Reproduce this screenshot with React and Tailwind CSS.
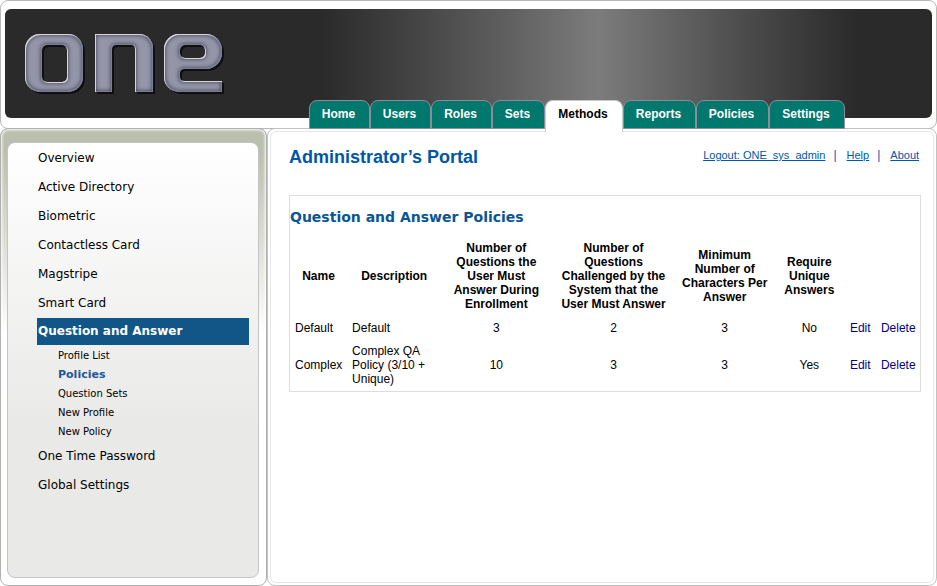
const tabs = [
  { label: 'Home', width: 'w-[61px]' },
  { label: 'Users', width: 'w-[61px]' },
  { label: 'Roles', width: 'w-[61px]' },
  { label: 'Sets', width: 'w-[53px]' },
  { label: 'Methods', width: 'w-[78px]', active: true },
  { label: 'Reports', width: 'w-[73px]' },
  { label: 'Policies', width: 'w-[73px]' },
  { label: 'Settings', width: 'w-[76px]' },
];

const menu = [
  { label: 'Overview' },
  { label: 'Active Directory' },
  { label: 'Biometric' },
  { label: 'Contactless Card' },
  { label: 'Magstripe' },
  { label: 'Smart Card' },
  {
    label: 'Question and Answer',
    active: true,
    children: ['Profile List', 'Policies', 'Question Sets', 'New Profile', 'New Policy'],
  },
  { label: 'One Time Password' },
  { label: 'Global Settings' },
];

const columns = [
  { label: 'Name', width: 'w-[57px]' },
  { label: 'Description', width: 'w-[94px]' },
  { label: 'Number of Questions the User Must Answer During Enrollment', width: 'w-[110px]' },
  { label: 'Number of Questions Challenged by the System that the User Must Answer', width: 'w-[124px]' },
  { label: 'Minimum Number of Characters Per Answer', width: 'w-[98px]' },
  { label: 'Require Unique Answers', width: 'w-[71px]' },
];

const policies = [
  { name: 'Default', description: 'Default', enroll: 3, challenge: 2, min: 3, unique: 'No' },
  { name: 'Complex', description: 'Complex QA Policy (3/10 + Unique)', enroll: 10, challenge: 3, min: 3, unique: 'Yes' },
];

function Logo() {
  return (
    <svg width="210" height="70" viewBox="20 29 210 70" role="img" aria-label="one">
      <defs>
        <mask id="logo-o" maskUnits="userSpaceOnUse" x="20" y="29" width="210" height="70">
          <rect x="25" y="34" width="58" height="58" rx="15" fill="#fff" />
          <rect x="42" y="45" width="25" height="37" rx="5" fill="#000" />
        </mask>
        <mask id="logo-n" maskUnits="userSpaceOnUse" x="20" y="29" width="210" height="70">
          <rect x="95" y="34" width="58" height="58" rx="14" fill="#fff" />
          <rect x="95" y="34" width="40" height="58" fill="#fff" />
          <rect x="95" y="60" width="58" height="32" fill="#fff" />
          <rect x="112" y="45" width="23" height="60" rx="4" fill="#000" />
        </mask>
        <mask id="logo-e" maskUnits="userSpaceOnUse" x="20" y="29" width="210" height="70">
          <rect x="164" y="34" width="40" height="58" rx="15" fill="#fff" />
          <rect x="164" y="34" width="58" height="35" rx="16" fill="#fff" />
          <rect x="185" y="75" width="37" height="17" fill="#fff" />
          <rect x="180" y="69" width="60" height="12" rx="4" fill="#000" />
          <rect x="180" y="45" width="25" height="13" rx="5" fill="#000" />
        </mask>
        <filter id="logo-bevel" filterUnits="userSpaceOnUse" x="20" y="29" width="210" height="70" colorInterpolationFilters="sRGB">
          <feOffset in="SourceAlpha" dx="2" dy="2" result="down" />
          <feGaussianBlur in="down" stdDeviation="0.5" result="drop" />
          <feFlood floodColor="#0c0c0e" floodOpacity="0.9" />
          <feComposite in2="drop" operator="in" result="shadow" />
          <feMorphology in="SourceAlpha" operator="erode" radius="1" result="core" />
          <feComposite in="SourceAlpha" in2="core" operator="out" result="edge" />
          <feFlood floodColor="#787d96" />
          <feComposite in2="edge" operator="in" result="rim" />
          <feOffset in="SourceAlpha" dx="1" dy="1" result="shifted" />
          <feComposite in="SourceAlpha" in2="shifted" operator="out" result="lit" />
          <feFlood floodColor="#d8d5d6" />
          <feComposite in2="lit" operator="in" result="light" />
          <feFlood floodColor="#23232d" floodOpacity="0.8" />
          <feComposite in2="core" operator="out" />
          <feGaussianBlur stdDeviation="2.2" />
          <feComposite in2="core" operator="in" result="inner" />
          <feMerge>
            <feMergeNode in="shadow" />
            <feMergeNode in="SourceGraphic" />
            <feMergeNode in="inner" />
            <feMergeNode in="rim" />
            <feMergeNode in="light" />
          </feMerge>
        </filter>
      </defs>
      <g filter="url(#logo-bevel)" fill="#9495a9">
        <rect x="20" y="29" width="70" height="70" mask="url(#logo-o)" />
        <rect x="90" y="29" width="70" height="70" mask="url(#logo-n)" />
        <rect x="160" y="29" width="70" height="70" mask="url(#logo-e)" />
      </g>
    </svg>
  );
}

function Header() {
  return (
    <header className="rounded-lg border border-[#bcb8b8] px-1 pt-2">
      <div className="h-[109px] rounded-md bg-linear-to-r from-[#2a2a2a] from-34% via-[#7c7c7c] via-64% to-[#2a2a2a] to-92% px-[15px] pt-5">
        <Logo />
      </div>
      <nav className="relative z-10 -mt-[18px] flex h-7 items-start pl-[304px]">
        {tabs.map((tab) => (
          <a
            key={tab.label}
            href="#"
            className={`${tab.width} shrink-0 rounded-t-lg border-t border-x pr-0.5 text-center text-xs leading-[26px] font-bold ${
              tab.active ? 'h-8 border-[#c9c9c9] bg-white text-black' : 'h-[29px] border-b border-[#8c8c96] bg-[#00786e] text-white'
            }`}
          >
            {tab.label}
          </a>
        ))}
      </nav>
    </header>
  );
}

function Sidebar() {
  return (
    <aside className="flex w-[267px] shrink-0 flex-col rounded-lg border border-[#b0b0b0] bg-linear-to-b from-[#babfae] from-5% to-white to-45% pt-[13px] pr-[7px] pb-[7px] pl-1.5 shadow-[inset_0_0_3px_1px_#ffffff]">
      <nav className="grow rounded-lg border border-[#c4c4c4] bg-linear-to-b from-white to-[#e9e9e8] to-65% pt-px font-['DejaVu_Sans',sans-serif] text-xs text-black">
        <ul>
          {menu.map((item) => (
            <li key={item.label}>
              {item.active ? (
                <a href="#" className="mr-[9px] mb-px ml-[29px] block h-[27px] bg-[#125687] pl-px leading-[27px] font-bold text-white">
                  {item.label}
                </a>
              ) : (
                <a href="#" className="block h-[29px] pl-[30px] leading-[29px]">
                  {item.label}
                </a>
              )}
              {item.children && (
                <ul className="pb-px pl-[50px] text-[10px] leading-[19px]">
                  {item.children.map((child) => (
                    <li key={child}>
                      <a href="#" className={child === 'Policies' ? 'block text-[11px] font-bold text-[#1f5796]' : 'block'}>
                        {child}
                      </a>
                    </li>
                  ))}
                </ul>
              )}
            </li>
          ))}
        </ul>
      </nav>
    </aside>
  );
}

function PolicyTable() {
  return (
    <section className="mt-6 border border-[#dddddd] pt-3 pb-px">
      <h2 className="font-['DejaVu_Sans',sans-serif] text-sm leading-[18px] font-bold text-[#0a5596]">Question and Answer Policies</h2>
      <table className="mt-2.5 w-full table-fixed text-xs leading-[14px] text-black">
        <thead>
          <tr className="h-[80px]">
            {columns.map((column) => (
              <th key={column.label} scope="col" className={`${column.width} px-[5px] py-1 text-center font-bold`}>
                {column.label}
              </th>
            ))}
            <td className="w-[31px]" />
            <td className="w-11" />
          </tr>
        </thead>
        <tbody>
          {policies.map((policy) => (
            <tr key={policy.name} className="h-6 text-center">
              <td className="py-1 pl-[5px] text-left">{policy.name}</td>
              <td className="px-[5px] py-1 text-left">{policy.description}</td>
              <td>{policy.enroll}</td>
              <td>{policy.challenge}</td>
              <td>{policy.min}</td>
              <td>{policy.unique}</td>
              <td className="pl-[5px] text-left">
                <a href="#" className="text-[#000080]">Edit</a>
              </td>
              <td className="pl-[5px] text-left">
                <a href="#" className="text-[#000080]">Delete</a>
              </td>
            </tr>
          ))}
        </tbody>
      </table>
    </section>
  );
}

export default function App() {
  return (
    <div className="flex min-h-screen flex-col bg-white font-['Liberation_Sans',Arial,sans-serif]">
      <Header />
      <div className="-mt-px flex grow">
        <Sidebar />
        <div className="flex grow rounded-lg border border-[#c2c2c2] p-0.5">
          <main className="grow rounded-md border border-[#e6e6e6] pt-[11px] pr-3 pl-[18px]">
            <div className="flex items-start justify-between">
              <h1 className="text-lg leading-7 font-bold text-[#0057a8]">Administrator’s Portal</h1>
              <nav className="flex pr-0.5 text-[11px] leading-6 text-[#0057a8]">
                <a href="#" className="underline">Logout: ONE_sys_admin</a>
                <span className="pr-2.5 pl-2 text-xs leading-6">|</span>
                <a href="#" className="underline">Help</a>
                <span className="pr-2.5 pl-2 text-xs leading-6">|</span>
                <a href="#" className="underline">About</a>
              </nav>
            </div>
            <PolicyTable />
          </main>
        </div>
      </div>
    </div>
  );
}
